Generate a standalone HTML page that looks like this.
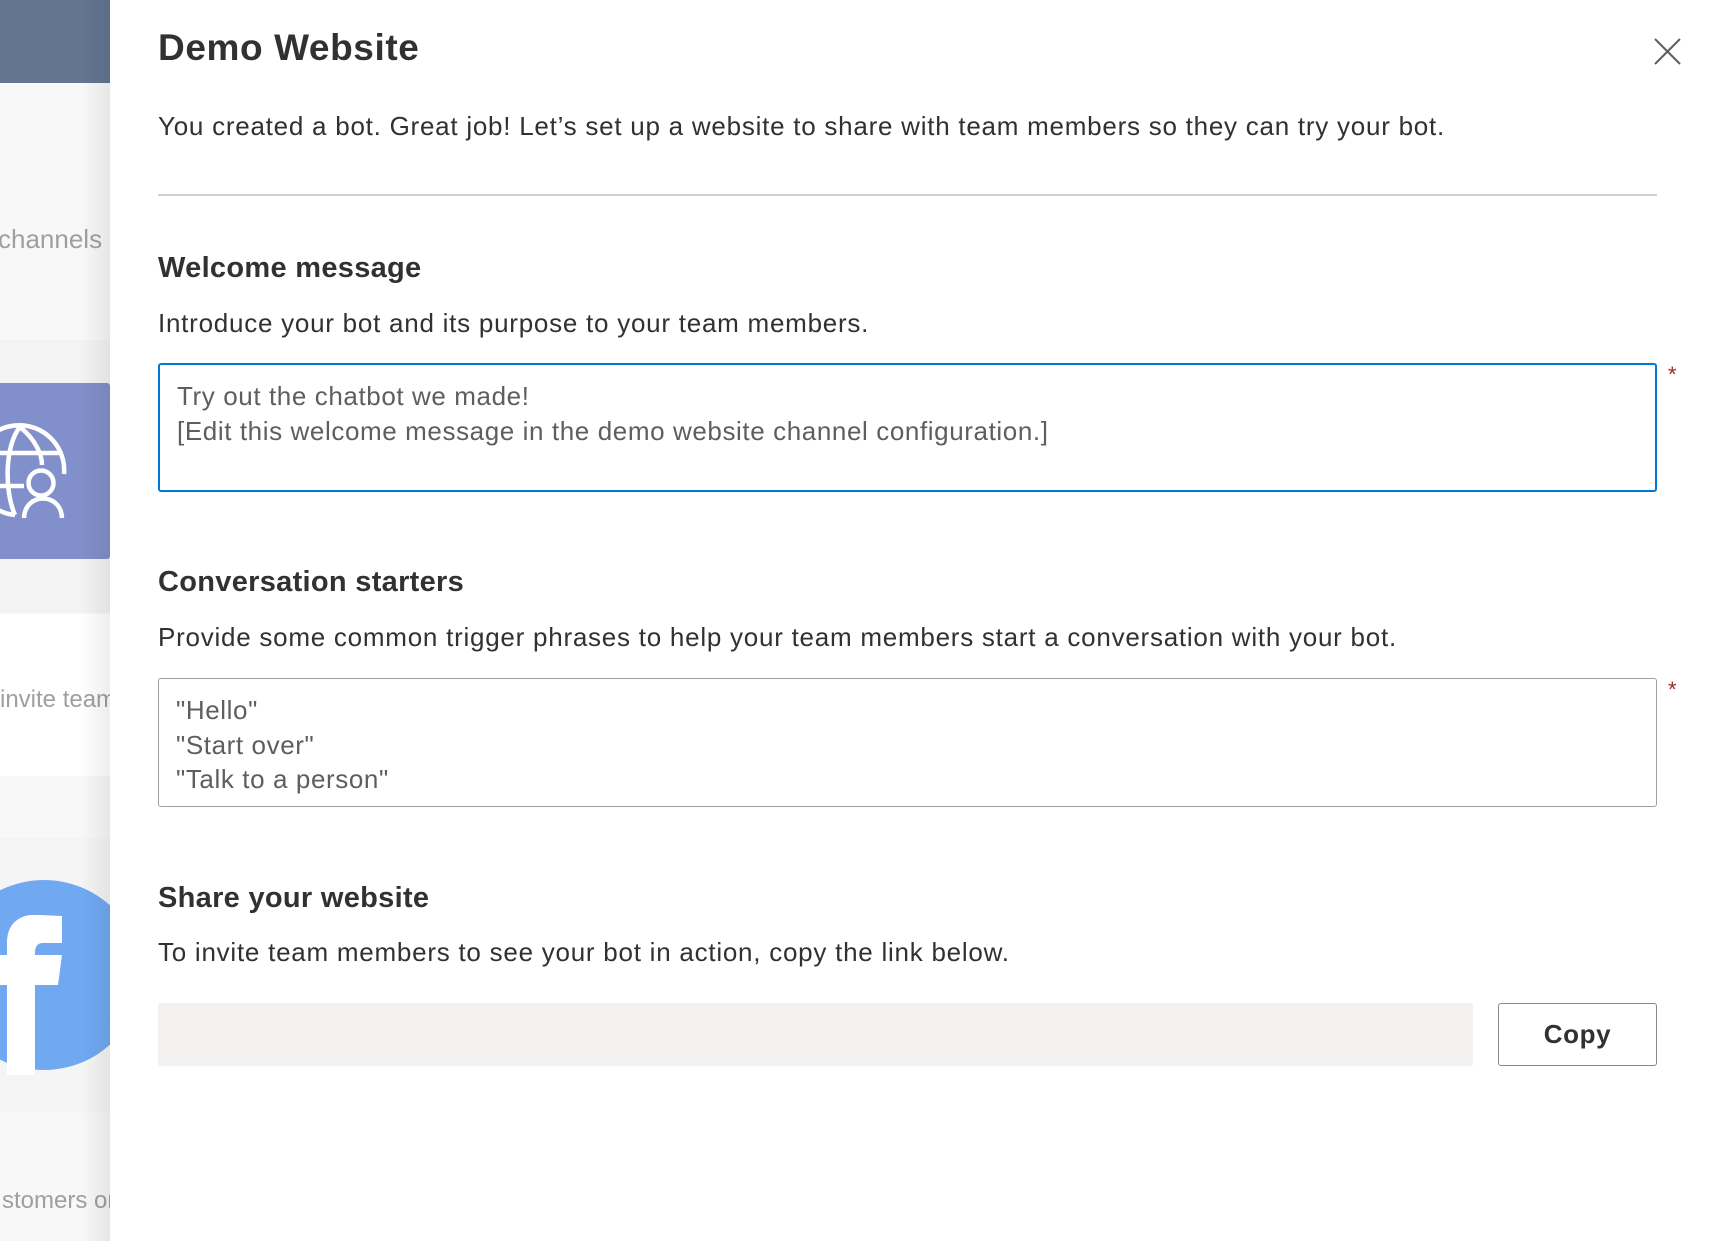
<!DOCTYPE html>
<html><head><meta charset="utf-8"><style>
*{margin:0;padding:0;box-sizing:border-box}
body{width:1717px;height:1241px;overflow:hidden;background:#fff;font-family:"Segoe UI","Liberation Sans",sans-serif;color:#323130;position:relative}
.a{position:absolute;white-space:nowrap}
.side{position:absolute;left:0;top:0;width:110px;height:1241px;background:#f8f8f8;overflow:hidden}
.side .shade{position:absolute;right:0;top:0;width:30px;height:100%;background:linear-gradient(to right,rgba(0,0,0,0),rgba(0,0,0,0.07))}
.st{font-size:26px;color:#a19f9d}
h1{font-size:37px;font-weight:600;letter-spacing:0.6px}
h2{font-size:29px;font-weight:700;letter-spacing:0.3px}
.p{font-size:26px;color:#323130;letter-spacing:0.75px}
.ta{position:absolute;left:158px;width:1499px;height:129px;border-radius:3px;padding:14px 17px;font-size:26px;line-height:34.5px;color:#605e5c;white-space:pre;letter-spacing:0.6px}
.ast{color:#a4262c;font-size:22px}
</style></head><body>
<div class="side">
 <div class="a" style="left:0;top:0;width:110px;height:83px;background:#627591"></div>
 <div class="a st" style="left:-2px;top:224px">channels</div>
 <div class="a" style="left:0;top:340px;width:110px;height:273px;background:#f3f3f3"></div>
 <div class="a" style="left:0;top:383px;width:110px;height:176px;background:#8190cb;border-radius:0 3px 3px 0"></div>
 <svg class="a" style="left:0;top:383px" width="110" height="176" viewBox="0 383 110 176">
  <g fill="none" stroke="#fff" stroke-width="4.5">
   <path d="M15 515 A45 45 0 1 1 64 474"/>
   <path d="M20 427 C36 440 42 455 42 465"/>
   <path d="M20 427 C5 445 4 490 15 515"/>
   <path d="M0 453 H60"/>
   <path d="M0 486 H24"/>
   <circle cx="41" cy="483" r="12.5"/>
   <path d="M24 518 C25 492 61 492 62 518"/>
  </g>
 </svg>
 <div class="a" style="left:0;top:614px;width:110px;height:162px;background:#fff"></div>
 <div class="a st" style="left:0;top:686px;font-size:24px">invite team</div>
 <div class="a" style="left:0;top:838px;width:110px;height:275px;background:#f5f5f5"></div>
 <div class="a" style="left:-53px;top:880px;width:194px;height:190px;border-radius:50%;background:#70a9f2"></div>
 <svg class="a" style="left:0;top:915px" width="70" height="160" viewBox="0 0 70 160"><path d="M7 160 V70 H-20 V40 H7 V28 C7 8 20 -2 40 0 L62 1 V28 H43 C37 28 35 32 35 38 V40 H62 L58 70 H35 V160 Z" fill="#fff"/></svg>
 <div class="a st" style="left:2px;top:1187px;font-size:24px">stomers on</div>
 <div class="shade"></div>
</div>
<h1 class="a" style="left:158px;top:27px">Demo Website</h1>
<svg class="a" style="left:1654px;top:38px" width="27" height="27" viewBox="0 0 27 27"><path d="M1 1L26 26M26 1L1 26" stroke="#605e5c" stroke-width="2"/></svg>
<div class="a p" style="left:158px;top:111px">You created a bot. Great job! Let’s set up a website to share with team members so they can try your bot.</div>
<div class="a" style="left:158px;top:194px;width:1499px;height:2px;background:#d2d0ce"></div>
<h2 class="a" style="left:158px;top:252px">Welcome message</h2>
<div class="a p" style="left:158px;top:308px">Introduce your bot and its purpose to your team members.</div>
<div class="ta" style="top:363px;border:2px solid #0078d4">Try out the chatbot we made!
[Edit this welcome message in the demo website channel configuration.]</div>
<div class="a ast" style="left:1668px;top:362px">*</div>
<h2 class="a" style="left:158px;top:566px">Conversation starters</h2>
<div class="a p" style="left:158px;top:622px">Provide some common trigger phrases to help your team members start a conversation with your bot.</div>
<div class="ta" style="top:678px;border:1.5px solid #a19f9d">"Hello"
"Start over"
"Talk to a person"</div>
<div class="a ast" style="left:1668px;top:677px">*</div>
<h2 class="a" style="left:158px;top:882px">Share your website</h2>
<div class="a p" style="left:158px;top:937px">To invite team members to see your bot in action, copy the link below.</div>
<div class="a" style="left:158px;top:1003px;width:1315px;height:63px;background:#f3f2f1;border-radius:2px"></div>
<div class="a" style="left:1498px;top:1003px;width:159px;height:63px;border:1.5px solid #8a8886;border-radius:3px;font-size:26px;font-weight:700;text-align:center;line-height:60px;letter-spacing:0.6px">Copy</div>
</body></html>
